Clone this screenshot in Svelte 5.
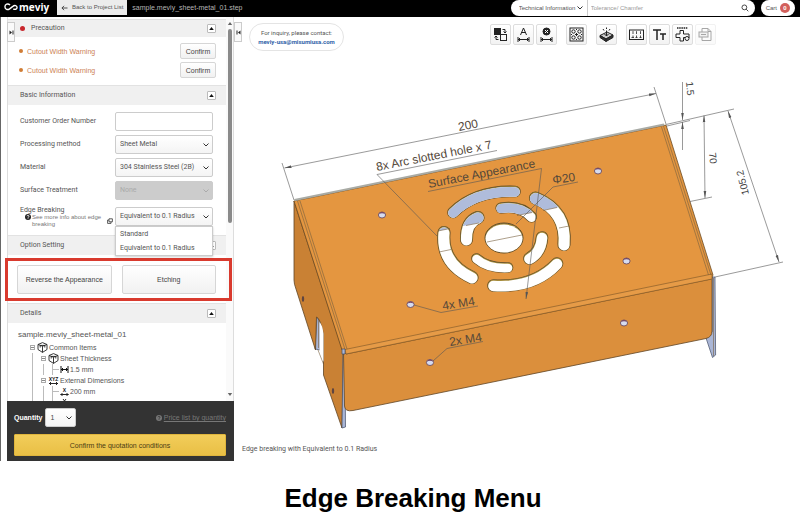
<script lang="ts">
	type Slot = { d: string; w: number };

	let orderNumber = $state('');
	let method = $state('Sheet Metal');
	let material = $state('304 Stainless Steel (2B)');
	let edge = $state('Equivalent to 0.1 Radius');
	let edgeOpen = $state(true);
	let quantity = $state('1');

	const warnings = ['Cutout Width Warning', 'Cutout Width Warning'];
	const edgeOptions = ['Standard', 'Equivalent to 0.1 Radius'];

	// Cooling slots, drawn as thick rounded strokes
	const slots: Slot[] = [
		{ d: 'M453 212.500Q476 190 515 191.500', w: 11 },
		{ d: 'M535.500 198Q567 211 564 244.500', w: 12.5 },
		{ d: 'M444 232.500Q441 263 472 277.500', w: 12.5 },
		{ d: 'M493.500 285.500Q534 288 557 263.500', w: 12 },
		{ d: 'M478 217.500Q466 222 466.500 239.500', w: 12.5 },
		{ d: 'M501 208Q521 205 531.500 217', w: 10.5 },
		{ d: 'M542 237.500Q541 252 529.500 258.500', w: 12 },
		{ d: 'M476.500 258.500Q488 268.500 508 267.500', w: 10 }
	];

	const holes = [
		[382, 215], [598, 171], [410.5, 304.5], [626.5, 261], [430, 362.5], [624, 323]
	];

	function pickEdge(option: string) {
		edge = option;
		edgeOpen = false;
	}
</script>

{#snippet chevron()}
	<svg class="chevron" viewBox="0 0 8 6" aria-hidden="true"><path d="M1.500 1.500L4 4L6.500 1.500" /></svg>
{/snippet}

{#snippet head(title: string, alert: boolean)}
	<div class="head">
		{#if alert}<i class="dot dot--red"></i>{/if}
		<h2>{title}</h2>
		<button class="toggle" aria-label="Collapse {title}">
			<svg viewBox="0 0 7 7" aria-hidden="true"><path d="M1.200 5L3.500 2L5.800 5Z" /></svg>
		</button>
	</div>
{/snippet}

{#snippet cube()}
	<svg class="cube" viewBox="0 0 11 11" aria-hidden="true">
		<path d="M5.500 .6L10 2.500V7.500L5.500 10.400L1 7.500V2.500ZM1 2.500L5.500 4.200L10 2.500M5.500 4.200V10.400M3.200 5.500V3.400H7.800V5.500" />
	</svg>
{/snippet}

<div class="page">
	<header class="topbar">
		<a class="logo" href="#home" aria-label="meviy">
			<svg viewBox="0 0 15 10" aria-hidden="true">
				<path d="M6.500 2.800C4 .8 1 2 1 4.800S4 8.500 6 7L9.500 4.300C11.500 2.600 14 3.500 14 5.500S11.500 8 10 7" />
			</svg>
			<span>meviy</span>
		</a>
		<a class="back" href="#projects">
			<svg viewBox="0 0 8 7" aria-hidden="true"><path d="M7.500 3.500H1M3.500 1L1 3.500L3.500 6" /></svg>
			Back to Project List
		</a>
		<span class="file">sample.meviy_sheet-metal_01.step</span>
		<form class="search">
			<span class="search__kind">
				<select aria-label="Search category"><option>Technical Information</option></select>
				{@render chevron()}
			</span>
			<input type="search" aria-label="Search" placeholder="Tolerance/ Chamfer" />
			<button type="button" aria-label="Search">
				<svg viewBox="0 0 9 9" aria-hidden="true"><circle cx="3.800" cy="3.800" r="2.700" /><path d="M5.800 5.800L8.200 8.200" /></svg>
			</button>
		</form>
		<a class="cart" href="#cart">Cart <b>0</b></a>
	</header>

	<main class="work">
		<aside class="side">
			<div class="side__body">
				<div class="panels">
					{@render head('Precaution', true)}
					<div class="warnings">
						{#each warnings as warning}
							<div class="warning">
								<i class="dot"></i>
								<span>{warning}</span>
								<button class="confirm">Confirm</button>
							</div>
						{/each}
					</div>

					{@render head('Basic Information', false)}
					<div class="form">
						<div class="row">
							<label for="order">Customer Order Number</label>
							<div class="field"><input id="order" type="text" bind:value={orderNumber} /></div>
						</div>
						<div class="row">
							<label for="method">Processing method</label>
							<div class="field">
								<select id="method" bind:value={method}><option>Sheet Metal</option></select>
								{@render chevron()}
							</div>
						</div>
						<div class="row">
							<label for="material">Material</label>
							<div class="field">
								<select id="material" bind:value={material}><option>304 Stainless Steel (2B)</option></select>
								{@render chevron()}
							</div>
						</div>
						<div class="row">
							<label for="surface">Surface Treatment</label>
							<div class="field field--off">
								<select id="surface" disabled><option>None</option></select>
								{@render chevron()}
							</div>
						</div>
						<div class="row row--edge">
							<div class="edge-label">
								<label for="edge">Edge Breaking</label>
								<a class="more" href="#edge-breaking">
									<svg class="info" viewBox="0 0 6 6" aria-hidden="true"><circle cx="3" cy="3" r="3" /><path d="M2 2.300Q2 1.300 3 1.300T4 2.300Q4 3 3 3.300V3.800M3 4.300V5" /></svg>
									<span>See more info about edge breaking</span>
									<svg viewBox="0 0 6 6" aria-hidden="true"><path d="M2 .8H5.400V3.800H2ZM2 2H.6V5.400H4V3.800" /></svg>
								</a>
							</div>
							<div class="field">
								<select id="edge" bind:value={edge}>
									{#each edgeOptions as option}<option>{option}</option>{/each}
								</select>
								{@render chevron()}
								{#if edgeOpen}
									<div class="menu">
										{#each edgeOptions as option}
											<button onclick={() => pickEdge(option)}>{option}</button>
										{/each}
									</div>
								{/if}
							</div>
						</div>
					</div>

					{@render head('Option Setting', false)}
					<div class="options">
						<button>Reverse the Appearance</button>
						<button>Etching</button>
					</div>

					{@render head('Details', false)}
					<div class="tree">
						<p>sample.meviy_sheet-metal_01</p>
						<ul>
							<li>
								<div class="node"><i class="minus"></i>{@render cube()}Common Items</div>
								<ul>
									<li>
										<div class="node"><i class="minus"></i>{@render cube()}Sheet Thickness</div>
										<ul>
											<li>
												<div class="node leaf">
													<svg class="measure" viewBox="0 0 9 9" aria-hidden="true"><path d="M1 1V8M8 1V8M1 4.500H8M3 3L1.500 4.500L3 6M6 3L7.500 4.500L6 6" /></svg>
													1.5 mm
												</div>
											</li>
										</ul>
									</li>
									<li>
										<div class="node">
											<i class="minus"></i>
											<svg class="axis axis--wide" viewBox="0 0 11 10" aria-hidden="true"><text x="5.500" y="4.500">XYZ</text><path d="M1 7.500H10M3 6L1.500 7.500L3 9M8 6L9.500 7.500L8 9" /></svg>
											External Dimensions
										</div>
										<ul>
											<li>
												<div class="node leaf">
													<svg class="axis" viewBox="0 0 9 10" aria-hidden="true"><text x="4.500" y="4.500">X</text><path d="M.5 7.500H8.500M2.500 6L1 7.500L2.500 9M6.500 6L8 7.500L6.500 9" /></svg>
													200 mm
												</div>
											</li>
											<li>
												<div class="node leaf">
													<svg class="axis" viewBox="0 0 9 10" aria-hidden="true"><path d="M3 1L4.500 3L6 1M4.500 3V5M.5 7.500H8.500" /></svg>
												</div>
											</li>
										</ul>
									</li>
								</ul>
							</li>
						</ul>
					</div>
				</div>
				<div class="scroll" aria-hidden="true">
					<svg viewBox="0 0 6 5"><path d="M.8 4L3 1L5.200 4Z" /></svg>
					<div class="scroll__track"><div class="scroll__thumb"></div></div>
					<svg viewBox="0 0 6 5"><path d="M.8 1L3 4L5.200 1Z" /></svg>
				</div>
			</div>

			<div class="quote">
				<div class="quote__row">
					<label for="quantity">Quantity</label>
					<div class="field field--quantity">
						<select id="quantity" bind:value={quantity}><option>1</option><option>2</option><option>3</option></select>
						{@render chevron()}
					</div>
					<a class="prices" href="#prices">
						<svg class="info info--dim" viewBox="0 0 6 6" aria-hidden="true"><circle cx="3" cy="3" r="3" /><path d="M2 2.300Q2 1.300 3 1.300T4 2.300Q4 3 3 3.300V3.800M3 4.300V5" /></svg>
						<span>Price list by quantity</span>
					</a>
				</div>
				<button class="submit">Confirm the quotation conditions</button>
			</div>

			<div class="callout"></div>
			<button class="tab tab--left" aria-label="Expand panel">
				<svg viewBox="0 0 5 5" aria-hidden="true"><path d="M.5 .5L3 2.500L.5 4.500ZM3.500 .5H4.500V4.500H3.500Z" /></svg>
			</button>
			<button class="tab tab--right" aria-label="Collapse panel">
				<svg viewBox="0 0 5 5" aria-hidden="true"><path d="M4.500 .5L2 2.500L4.500 4.500ZM.5 .5H1.500V4.500H.5Z" /></svg>
			</button>
		</aside>

		<section class="viewer">
			<svg class="model" viewBox="234 17 566 443" role="img" aria-label="Sheet metal part">
				<defs>
					<clipPath id="flange"><path d="M430 150H580V203L430 232.500Z" /></clipPath>
					<marker id="arrow" viewBox="0 0 8 4" refX="8" refY="2" markerWidth="7" markerHeight="3.500" markerUnits="userSpaceOnUse" orient="auto-start-reverse"><path d="M0 0.500L8 2L0 3.500Z" fill="#555" /></marker>
				</defs>

				<!-- right flange -->
				<path class="steel" d="M706 338L712 332V277L715 277L715.600 355L712.500 357.500Z" />
				<path class="edge" d="M713.500 278V356" />

				<!-- left face with its notch -->
				<path class="steel" d="M315 349L317 317L320 321V350Z" />
				<path class="edge" d="M318.500 318V348M318 350L323.500 364" />
				<path class="left" d="M294 201V280Q294 284 296 289L315.500 350L316.500 317Q320 318 323.500 334V375L342 428L343.500 353Z" />
				<path class="hollow" d="M319.500 322Q322.500 325 323.500 334V362L319.500 351Z" />
				<path class="steel" d="M342 428L343 352L345 353L345.500 427Z" />
				<ellipse class="dark" cx="303" cy="299" rx="1.200" ry="3" />
				<ellipse class="dark" cx="333" cy="391" rx="1.200" ry="3" />

				<!-- front face -->
				<path class="front" d="M343.500 353L712 277V331Q712 337 706 338.500L353 410.500Q345 412 344.500 406Z" />

				<!-- top face -->
				<path class="top" d="M294 201L666 125L713 275L711 279L346 354L342 350Z" />
				<path class="bend" d="M345 349.500L712 274V279L346 354Z" />
				<path class="edge" d="M297.500 201L345 349.500M300 201L347 349M663.500 126L711 275M661.500 127L708.500 275" />
				<path class="edge edge--back" d="M294.500 200L664 124.500" />
				<rect class="steel" x="342" y="349" width="3" height="5" />

				{#each slots as slot}
					<path class="slot" d={slot.d} stroke="#5b4b2c" stroke-width={slot.w + 0.6} />
					<path class="slot" d={slot.d} stroke="#a58b3b" stroke-width={slot.w - 0.6} />
					<path class="slot" d={slot.d} stroke="#fff" stroke-width={slot.w - 1.4} transform="translate(0 .5)" />
				{/each}
				<g clip-path="url(#flange)">
					{#each slots as slot}
						<path class="slot" d={slot.d} stroke="#afbcdb" stroke-width={slot.w - 1.4} transform="translate(0 .5)" />
					{/each}
				</g>
				<path class="edge" d="M438 231L450 228.500M466 225.500L479 223M517 215.500L532 212.500M543 210.500L557 207.500M439 252L451 249.500M559 228L569 226" />
				<ellipse cx="504" cy="238" rx="19" ry="15" fill="#a58b3b" stroke="#5b4b2c" />
				<ellipse cx="504" cy="238.600" rx="18.500" ry="14" fill="#fff" />
				<path class="edge" d="M487 242L522 235" />

				{#each holes as [x, y]}
					<ellipse {...{ cx: x, cy: y }} rx="3.600" ry="3" fill="#d6dcf0" stroke="#5f3f55" stroke-width=".8" />
					<path d="M{x - 3.3} {y - 0.8}Q{x} {y - 5} {x + 3.3} {y - 0.8}Q{x} {y - 2.5} {x - 3.3} {y - 0.8}" fill="#74425f" />
				{/each}

				<!-- dimension lines -->
				<g class="dim">
					<path d="M282 163L294 200M654 87L666 124M666 124.500L734 109M667 126L690 120.500M690 201.500L712 197M715 277L783 262" />
					<path d="M284.500 168L656 93.500" marker-start="url(#arrow)" marker-end="url(#arrow)" />
					<path d="M682.500 82V120" marker-end="url(#arrow)" />
					<path d="M682.500 150V122" marker-end="url(#arrow)" />
					<path d="M704 115.500L705 198" marker-start="url(#arrow)" marker-end="url(#arrow)" />
					<path d="M728 111L779 262" marker-start="url(#arrow)" marker-end="url(#arrow)" />
					<path d="M497 150.500L377 174.500L437 236M578 182L553 187L516 224M478 306L441 312.500L414 305M483 341.500L447 348.500L433 361" />
					<path d="M428 191.500L541.500 168.500L526 299" marker-end="url(#arrow)" />
				</g>
				<g class="note">
					<text transform="translate(459 131) rotate(-11)">200</text>
					<text transform="translate(377 171) rotate(-11)">8x Arc slotted hole x 7</text>
					<text transform="translate(429 188) rotate(-11)">Surface Appearance</text>
					<text transform="translate(553 184) rotate(-8)">Φ20</text>
					<text transform="translate(443 310) rotate(-9)">4x M4</text>
					<text transform="translate(450 346) rotate(-9)">2x M4</text>
					<text class="small" transform="translate(686 82) rotate(84)">1.5</text>
					<text class="small" transform="translate(709 153) rotate(84)">70</text>
					<text class="small" transform="translate(749 194) rotate(-104)">105.2</text>
				</g>
			</svg>

			<div class="overlay">
				<p class="contact">For inquiry, please contact:<br /><a href="mailto:meviy-usa@misumiusa.com">meviy-usa@misumiusa.com</a></p>
				<div class="tools">
					<button aria-label="Reverse view">
						<svg viewBox="0 0 17 17"><rect x="2.500" y="2.500" width="6" height="6" fill="#222" /><rect x="8.500" y="8.500" width="6" height="6" /><path d="M10.500 3.500H13V6.500M11.500 5.500L13 7L14.500 5.500M6.500 13.500H4V10.500M2.500 11.500L4 10L5.500 11.500" /></svg>
					</button>
					<button aria-label="Measure distance">
						<svg viewBox="0 0 17 17"><path d="M5.500 9L8.500 2L11.500 9M6.500 6.500H10.500M3 11V16M14 11V16M3 13.500H14M5 12L3.500 13.500L5 15M12 12L13.500 13.500L12 15" /></svg>
					</button>
					<button aria-label="Clear measurement">
						<svg viewBox="0 0 17 17"><circle cx="8.500" cy="5.500" r="3.500" fill="#222" /><path d="M7 4L10 7M10 4L7 7" stroke="#fff" /><path d="M3 11V16M14 11V16M3 13.500H14M5 12L3.500 13.500L5 15M12 12L13.500 13.500L12 15" /></svg>
					</button>
					<button class="apart" aria-label="Hole list">
						<svg viewBox="0 0 17 17"><rect x="2" y="2" width="13" height="13" /><circle cx="5.500" cy="5.500" r="1.700" /><circle cx="11.500" cy="5.500" r="1.700" /><circle cx="5.500" cy="11.500" r="1.700" /><circle cx="11.500" cy="11.500" r="1.700" /><path d="M8.500 7V10M7 8.500H10M8.500 3V4M8.500 13V14M3 8.500H4M13 8.500H14" /></svg>
					</button>
					<button class="apart" aria-label="Engraving">
						<svg viewBox="0 0 17 17"><path d="M2 9.500L9 6L15 9L8 13Z" fill="#ccc" /><path d="M2 9.500V11.500L8 15.500L15 11.500V9L8 13ZM8 13V15.500" fill="#333" /><path d="M8.500 10V4.500M6.500 8L8.500 10L10.500 8M5 3L6 4.500M8.500 1.500V3M12 3L11 4.500" /></svg>
					</button>
					<button class="apart" aria-label="Dimensions">
						<svg viewBox="0 0 17 17"><rect x="1.500" y="4" width="14" height="9.500" /><path d="M4.500 6L5 5.500V8M8 6L8.500 5.500V8M12 6L12.500 5.500V8M5 9.500V11.500M8.500 9.500V11.500M12.500 9.500V11.500M3.500 11.500H6M7.500 11.500H9.500M11.500 11.500H13.500" stroke-width=".8" /></svg>
					</button>
					<button aria-label="Text size">
						<svg viewBox="0 0 17 17"><path d="M2 4H10M6 4V14M9 8H15M12 8V14" stroke-width="1.500" /></svg>
					</button>
					<button aria-label="Unfolded view">
						<svg viewBox="0 0 17 17"><path d="M6 4.500H9.500V8H15V12M6 4.500V8H2V11.500H6V15H9.500V11.500H11" /><circle cx="13" cy="12.500" r="2" /><path d="M3 2H14" stroke-dasharray="1.500 .7" stroke-width="1.500" /></svg>
					</button>
					<button aria-label="Export PDF" disabled>
						<svg viewBox="0 0 17 17"><path d="M5 6V2.500H11L14 5.500V14.500H5V11M11 2.500V5.500H14" /><rect x="2" y="6" width="9" height="5" fill="#ddd" /><path d="M4 8.500H9" /></svg>
					</button>
				</div>
			</div>
			<p class="status">Edge breaking with Equivalent to 0.1 Radius</p>
		</section>
	</main>

	<h1>Edge Breaking Menu</h1>
</div>

<style>
	:global(body) {
		background: #fff;
	}

	.page {
		font: 7px/9px 'Liberation Sans', Arial, sans-serif;
		color: #555;
	}

	button, input, select {
		box-sizing: border-box;
		margin: 0;
		padding: 0;
		font: inherit;
		color: inherit;
	}

	p, h1, h2, ul {
		margin: 0;
		padding: 0;
	}

	svg {
		display: block;
		flex: none;
		fill: none;
	}

	a {
		color: inherit;
		text-decoration: none;
	}

	/* Top bar */
	.topbar {
		display: flex;
		align-items: flex-start;
		height: 17px;
		padding: 0 5px 0 4px;
		background: #000;
		font-size: 6px;
	}

	.logo {
		display: flex;
		align-items: center;
		gap: 1px;
		width: 53px;
		height: 14px;
		color: #fff;
	}

	.logo svg {
		width: 14px;
		height: 10px;
		stroke: #fff;
		stroke-width: 1.500;
	}

	.logo span {
		font: bold 10px/14px 'Open Sans', sans-serif;
	}

	.back {
		display: flex;
		align-items: center;
		gap: 4px;
		height: 15px;
		padding: 0 4px;
		background: #ececec;
		white-space: nowrap;
	}

	.back svg {
		width: 7px;
		height: 6px;
		stroke: #333;
	}

	.file {
		margin-left: 5px;
		font-size: 7px;
		line-height: 15px;
		color: #b5b5b5;
	}

	.search {
		display: flex;
		align-items: center;
		width: 244px;
		height: 16px;
		margin-left: auto;
		border-radius: 8px;
		background: #fff;
	}

	.search__kind {
		position: relative;
		width: 76px;
		border-right: 1px solid #ccc;
	}

	.search select {
		display: block;
		width: 100%;
		height: 16px;
		padding-left: 8px;
		border: 0;
		background: none;
		appearance: none;
	}

	.search input {
		flex: 1;
		min-width: 0;
		height: 14px;
		padding-left: 3px;
		border: 0;
		background: none;
		outline: 0;
	}

	.search input::placeholder {
		color: #999;
	}

	.search button {
		width: 20px;
		border: 0;
		background: none;
	}

	.search button svg {
		width: 8px;
		height: 8px;
		margin: 0 auto;
		stroke: #333;
	}

	.cart {
		display: flex;
		align-items: center;
		gap: 3px;
		height: 16px;
		margin-left: 6px;
		padding: 0 5px;
		border-radius: 8px;
		background: #fff;
	}

	.cart b {
		width: 10px;
		height: 10px;
		border-radius: 50%;
		background: #d2605c;
		color: #fff;
		line-height: 10px;
		text-align: center;
	}

	/* Side panel */
	.work {
		display: flex;
		align-items: flex-start;
		border-left: 1px solid #666;
	}

	.side {
		position: relative;
		flex: none;
		width: 227px;
		margin-left: 6px;
	}

	.side__body {
		display: flex;
		height: 384px;
		border-left: 1px solid #ddd;
		border-right: 1px solid #ddd;
		box-sizing: border-box;
	}

	.panels {
		flex: 1;
		min-width: 0;
		padding-top: 2px;
		overflow: hidden;
	}

	.head {
		display: flex;
		align-items: center;
		height: 20px;
		padding: 0 10px 0 12px;
		box-sizing: border-box;
		background: #f0f0f0;
		border-top: 1px solid #e2e2e2;
	}

	.head:first-child {
		height: 18px;
	}

	.head h2 {
		flex: 1;
		font: 7px/9px Roboto, sans-serif;
	}

	.toggle {
		width: 9px;
		height: 9px;
		border: 1px solid #bbb;
		border-radius: 1px;
		background: #fff;
	}

	.toggle svg {
		width: 7px;
		height: 7px;
		fill: #111;
	}

	.dot {
		width: 4px;
		height: 4px;
		margin-right: 4px;
		border-radius: 50%;
		background: #d07c35;
	}

	.dot--red {
		width: 5px;
		height: 5px;
		margin-right: 6px;
		background: #c8272d;
	}

	.warnings {
		display: grid;
		gap: 3px;
		padding: 6px 10px 7px 11px;
	}

	.warning {
		display: flex;
		align-items: center;
		color: #cc7f55;
	}

	.confirm {
		width: 36px;
		height: 16px;
		margin-left: auto;
	}

	.confirm,
	.options button {
		border: 1px solid #d6d6d6;
		border-radius: 2px;
		background: linear-gradient(#fff, #f1f1f1);
		color: #444;
	}

	.form {
		display: grid;
		gap: 4px;
		padding: 7px 13px 9px 12px;
		font-family: Roboto, sans-serif;
	}

	.row {
		display: flex;
		align-items: center;
		justify-content: space-between;
		height: 19px;
	}

	.row--edge {
		margin-top: 3px;
	}

	.field {
		position: relative;
		width: 98px;
	}

	.field input,
	.field select {
		display: block;
		width: 100%;
		height: 19px;
		padding: 0 4px;
		border: 1px solid #ccc;
		border-radius: 2px;
		background: linear-gradient(#fff, #f4f4f4);
		appearance: none;
	}

	.field input {
		background: #fff;
	}

	.field--off select {
		background: #ccc;
		color: #aaa;
		opacity: 1;
	}

	.chevron {
		position: absolute;
		top: calc(50% - 3px);
		right: 3px;
		width: 8px;
		height: 6px;
		stroke: #333;
		pointer-events: none;
	}

	.field--off .chevron {
		stroke: #aaa;
	}

	.edge-label {
		width: 93px;
	}

	.edge-label label {
		display: block;
		line-height: 8px;
	}

	.more {
		display: flex;
		align-items: center;
		gap: 1px;
		padding-left: 5px;
		color: #777;
		font: 6px/7px 'Liberation Sans', Arial, sans-serif;
	}

	.more svg {
		width: 6px;
		height: 6px;
		stroke: #333;
		stroke-width: .8;
	}

	.info {
		width: 6px;
		height: 6px;
	}

	.more .info {
		align-self: flex-start;
		stroke: #fff;
	}

	.info circle {
		fill: #222;
		stroke: none;
	}

	.info--dim {
		stroke: #333;
		stroke-width: .8;
	}

	.info--dim circle {
		fill: #777;
	}

	.menu {
		position: absolute;
		z-index: 2;
		top: 19px;
		left: 0;
		width: 100%;
		box-sizing: border-box;
		border: 1px solid #ccc;
		background: #fff;
		box-shadow: 0 1px 2px #0003;
	}

	.menu button {
		display: block;
		width: 100%;
		height: 14px;
		padding: 0 4px;
		border: 0;
		background: none;
		text-align: left;
	}

	.options {
		display: grid;
		grid-template-columns: 1fr 1fr;
		gap: 10px;
		padding: 10px 10px 9px 9px;
	}

	.options button {
		height: 29px;
	}

	.callout {
		position: absolute;
		top: 241px;
		left: -2px;
		right: 2px;
		height: 43px;
		box-sizing: border-box;
		border: 3px solid #d93a2e;
		pointer-events: none;
	}

	/* Details tree */
	.tree {
		padding: 5px 0 0 10px;
	}

	.tree p {
		font-size: 8px;
		line-height: 14px;
	}

	.tree ul {
		list-style: none;
	}

	.tree p + ul {
		padding-left: 12px;
	}

	.tree li > ul {
		margin-left: 2px;
		padding-left: 8px;
		border-left: 1px solid #bbb;
	}

	.node {
		display: flex;
		align-items: center;
		height: 11px;
		gap: 1px;
		white-space: nowrap;
	}

	.leaf::before {
		content: '';
		width: 6px;
		align-self: stretch;
		border-left: 1px solid #bbb;
		background: linear-gradient(#bbb, #bbb) center / 100% 1px no-repeat;
	}

	.minus {
		width: 5px;
		height: 5px;
		margin-right: 1px;
		box-sizing: border-box;
		border: 1px solid #aaa;
		background: linear-gradient(#888, #888) center / 3px 1px no-repeat #fff;
	}

	.cube {
		width: 11px;
		height: 11px;
		stroke: #222;
		stroke-width: .9;
	}

	.measure {
		width: 9px;
		height: 9px;
		stroke: #111;
	}

	.axis {
		width: 9px;
		height: 10px;
		stroke: #111;
		stroke-width: .9;
	}

	.axis--wide {
		width: 11px;
	}

	.axis text {
		fill: #111;
		stroke: none;
		font: bold 5px 'Liberation Sans', sans-serif;
		text-anchor: middle;
	}

	.scroll {
		display: flex;
		flex-direction: column;
		align-items: center;
		width: 7px;
		padding: 4px 0;
		box-sizing: border-box;
		background: #fafafa;
	}

	.scroll svg {
		width: 6px;
		height: 5px;
		fill: #666;
	}

	.scroll__track {
		flex: 1;
		width: 4px;
		padding: 3px 0;
	}

	.scroll__thumb {
		height: 54%;
		border-radius: 2px;
		background: #8a8a8a;
	}

	.quote {
		padding: 7px 8px 5px 7px;
		background: #333;
	}

	.quote__row {
		display: flex;
		align-items: center;
		gap: 3px;
		margin-bottom: 7px;
		color: #fff;
	}

	.quote__row label {
		font-weight: bold;
	}

	.field--quantity {
		width: 31px;
		color: #444;
	}

	.prices {
		display: flex;
		align-items: center;
		gap: 2px;
		margin-left: auto;
		color: #777;
	}

	.prices span {
		text-decoration: underline;
	}

	.submit {
		display: block;
		width: 100%;
		height: 22px;
		border: 1px solid #e0b53c;
		border-radius: 1px;
		background: linear-gradient(#f2cd5a, #e9bf45);
		color: #4a3b12;
	}

	.tab {
		position: absolute;
		top: 5px;
		width: 8px;
		height: 20px;
		border: 1px solid #ccc;
		background: #fafafa;
	}

	.tab svg {
		width: 5px;
		height: 5px;
		margin: 0 auto;
		fill: #222;
	}

	.tab--left {
		left: 0;
	}

	.tab--right {
		left: 100%;
	}

	/* Viewer */
	.viewer {
		position: relative;
		flex: 1;
		min-width: 0;
	}

	.model {
		width: 100%;
		height: auto;
		stroke-linejoin: round;
	}

	.top {
		fill: #e49640;
		stroke: #6b4a22;
		stroke-width: .8;
	}

	.front {
		fill: #db8f3c;
		stroke: #5f4526;
		stroke-width: .8;
	}

	.left {
		fill: #c98134;
		stroke: #5f4526;
		stroke-width: .8;
	}

	.hollow {
		fill: #fff;
	}

	.bend {
		fill: #e69b47;
		stroke: #8a5f2b;
		stroke-width: .7;
	}

	.steel {
		fill: #aab6d6;
		stroke: #444d66;
		stroke-width: .7;
	}

	.dark {
		fill: #5f4540;
	}

	.edge {
		stroke: #77603e;
		stroke-width: .6;
	}

	.edge--back {
		stroke: #a9aba5;
		stroke-width: 1.800;
	}

	.slot {
		stroke-linecap: round;
	}

	.dim {
		stroke: #555;
		stroke-width: .6;
	}

	.note {
		fill: #54483a;
		font: 12px 'Liberation Sans', sans-serif;
	}

	.note .small {
		fill: #444;
		font-size: 10px;
	}

	.overlay {
		position: absolute;
		top: 6px;
		left: 15px;
		right: 84px;
		display: flex;
		align-items: flex-start;
		justify-content: space-between;
	}

	.contact {
		width: 95px;
		padding: 4px 0;
		box-sizing: border-box;
		border: 1px solid #e4e4e4;
		border-radius: 14px;
		background: #fff;
		font: 6px/9px Roboto, sans-serif;
		text-align: center;
	}

	.contact a {
		color: #2f62a8;
		font-weight: bold;
	}

	.tools {
		display: flex;
		gap: 2px;
		padding-top: 1px;
	}

	.tools button {
		width: 21px;
		height: 21px;
		border: 1px solid #ddd;
		border-radius: 2px;
		background: linear-gradient(#fff, #f2f2f2);
	}

	.tools .apart {
		margin-left: 7px;
	}

	.tools button:disabled {
		opacity: .4;
	}

	.tools svg {
		width: 17px;
		height: 17px;
		margin: 0 auto;
		stroke: #222;
	}

	.status {
		position: absolute;
		left: 8px;
		bottom: 6px;
		font-family: Roboto, sans-serif;
	}

	h1 {
		padding: 21px 0 0 26px;
		color: #000;
		font: bold 26px/32px 'Liberation Sans', Arial, sans-serif;
		text-align: center;
	}
</style>
